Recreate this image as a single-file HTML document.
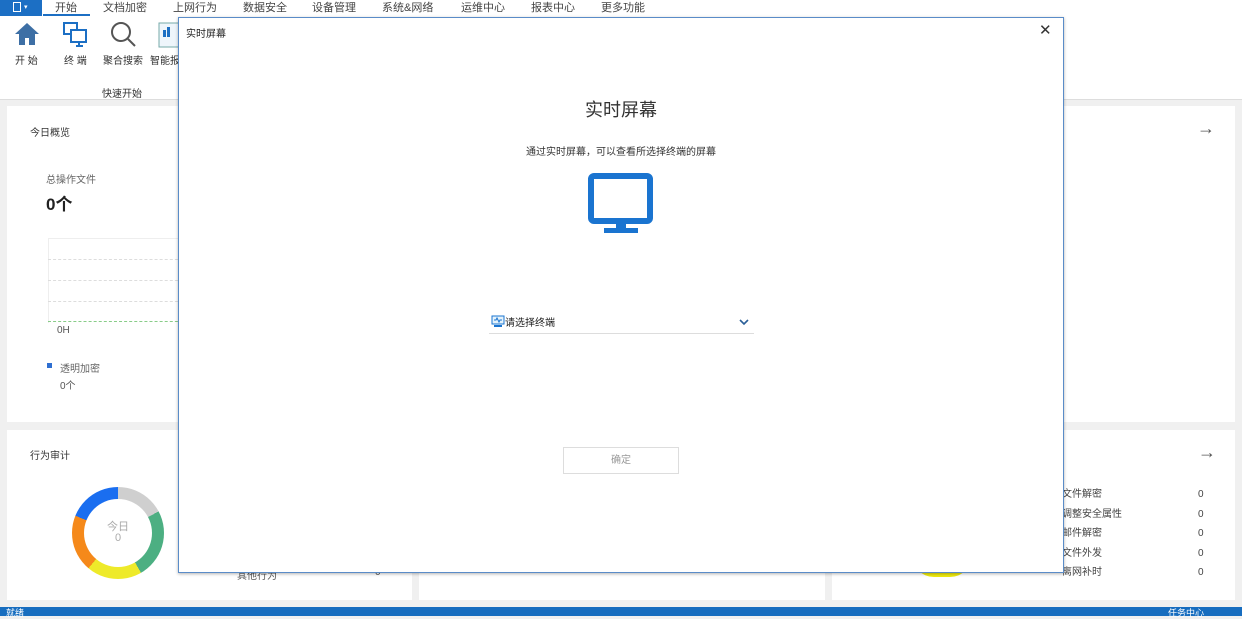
<!DOCTYPE html>
<html><head><meta charset="utf-8"><style>
*{margin:0;padding:0;box-sizing:border-box}
body{width:1242px;height:616px;overflow:hidden;background:#f0f0f0;font-family:"Liberation Sans","Noto Sans CJK SC",sans-serif;color:#333;position:relative;font-size:10px}
.abs{position:absolute}
.menu{left:0;top:0;width:1242px;height:16px;background:#fff}
.menu span{position:absolute;top:-1px;font-size:11px;color:#444}
.ribbon{left:0;top:16px;width:1242px;height:84px;background:#fff;border-bottom:1px solid #ddd}
.card{background:#fff}
.t{font-size:10px;color:#333}
</style></head><body>
<div class="abs menu">
 <div class="abs" style="left:0;top:0;width:42px;height:16px;background:#1c6fc4"></div>
 <div class="abs" style="left:13px;top:2px;width:8px;height:10px;border:1.5px solid #fff"></div>
 <div class="abs" style="left:24px;top:3px;color:#fff;font-size:7px">▾</div>
 <span style="left:55px">开始</span>
 <div class="abs" style="left:43px;top:14px;width:47px;height:2px;background:#1c6fc4"></div>
 <span style="left:103px">文档加密</span><span style="left:173px">上网行为</span><span style="left:243px">数据安全</span><span style="left:312px">设备管理</span><span style="left:382px">系统&amp;网络</span><span style="left:461px">运维中心</span><span style="left:531px">报表中心</span><span style="left:601px">更多功能</span>
</div>
<div class="abs ribbon">
 <svg class="abs" style="left:14px;top:6px" width="26" height="24" viewBox="0 0 26 24"><path d="M13 1L1 12h4v11h6v-7h4v7h6V12h4z" fill="#3d6fa5"/></svg>
 <svg class="abs" style="left:62px;top:5px" width="28" height="28" viewBox="0 0 28 28" fill="none" stroke="#1c6fc4" stroke-width="2"><rect x="2" y="2" width="13" height="11"/><rect x="9" y="9" width="15" height="12" fill="#fff"/><path d="M14 25h7M17 21v4"/></svg>
 <svg class="abs" style="left:110px;top:5px" width="28" height="28" viewBox="0 0 28 28" fill="none" stroke="#555" stroke-width="2"><circle cx="11" cy="11" r="9"/><path d="M18 18l7 7"/></svg>
 <svg class="abs" style="left:158px;top:6px" width="22" height="26" viewBox="0 0 22 26"><rect x="1" y="1" width="20" height="24" fill="#eef5fb" stroke="#7aa"/><rect x="5" y="8" width="3" height="7" fill="#1c6fc4"/><rect x="9" y="5" width="3" height="10" fill="#1c6fc4"/></svg>
 <div class="abs t" style="left:15px;top:36px">开 始</div>
 <div class="abs t" style="left:64px;top:36px">终 端</div>
 <div class="abs t" style="left:103px;top:36px">聚合搜索</div>
 <div class="abs t" style="left:150px;top:36px">智能报</div>
 <div class="abs t" style="left:102px;top:69px">快速开始</div>
</div>
<div class="abs card" style="left:7px;top:106px;width:405px;height:316px">
 <div class="abs t" style="left:23px;top:18px">今日概览</div>
 <div class="abs" style="left:39px;top:65px;color:#666">总操作文件</div>
 <div class="abs" style="left:39px;top:84px;font-size:17px;font-weight:bold;color:#222">0个</div>
 <div class="abs" style="left:41px;top:132px;width:140px;height:85px;border-top:1px solid #eee;border-left:1px solid #eee"></div>
 <div class="abs" style="left:41px;top:153px;width:140px;border-top:1px dashed #ddd"></div>
 <div class="abs" style="left:41px;top:174px;width:140px;border-top:1px dashed #ddd"></div>
 <div class="abs" style="left:41px;top:195px;width:140px;border-top:1px dashed #ddd"></div>
 <div class="abs" style="left:41px;top:215px;width:140px;border-top:1px dashed #8c8"></div>
 <div class="abs" style="left:50px;top:219px;color:#555">0H</div>
 <div class="abs" style="left:40px;top:257px;width:5px;height:5px;background:#2e6fd1"></div>
 <div class="abs" style="left:53px;top:254px;color:#666">透明加密</div>
 <div class="abs" style="left:53px;top:271px;color:#555">0个</div>
</div>
<div class="abs card" style="left:1063px;top:106px;width:172px;height:316px">
 <div class="abs" style="left:134px;top:12px;font-size:18px;color:#555">→</div>
</div>
<div class="abs card" style="left:7px;top:430px;width:405px;height:170px">
 <div class="abs t" style="left:23px;top:17px">行为审计</div>
 <div class="abs" style="left:65px;top:57px;width:92px;height:92px;border-radius:50%;background:conic-gradient(#cfcfcf 0 62deg,#4caf82 62deg 150deg,#eeea2a 150deg 220deg,#f5891a 220deg 292deg,#1a6ef0 292deg 360deg)"></div>
 <div class="abs" style="left:77px;top:69px;width:68px;height:68px;border-radius:50%;background:#fff"></div>
 <div class="abs" style="left:100px;top:88px;color:#aaa;font-size:11px">今日</div>
 <div class="abs" style="left:108px;top:102px;color:#aaa;font-size:11px">0</div>
 <div class="abs" style="left:230px;top:137px;color:#555">其他行为</div>
 <div class="abs" style="left:368px;top:137px;color:#555">0</div>
</div>
<div class="abs card" style="left:419px;top:430px;width:406px;height:170px"></div>
<div class="abs card" style="left:832px;top:430px;width:403px;height:170px">
 <div class="abs" style="left:80px;top:125px;width:60px;height:22px;border-radius:0 0 30px 30px;background:#eeea10"></div>
 <div class="abs" style="left:366px;top:12px;font-size:18px;color:#555">→</div>
 <div class="abs" style="left:230px;top:55px;color:#444;line-height:19.5px">文件解密<br>调整安全属性<br>邮件解密<br>文件外发<br>离网补时</div>
 <div class="abs" style="left:366px;top:55px;color:#444;line-height:19.5px">0<br>0<br>0<br>0<br>0</div>
</div>
<div class="abs" style="left:0;top:607px;width:1242px;height:9px;background:#176dbf"></div>
<div class="abs" style="left:6px;top:607px;color:#fff;font-size:9px;line-height:12px">就绪</div>
<div class="abs" style="left:1168px;top:607px;color:#fff;font-size:9px;line-height:12px">任务中心</div>
<div class="abs" style="left:178px;top:17px;width:886px;height:556px;background:#fff;border:1px solid #5a8cc8;box-shadow:0 1px 3px rgba(0,0,0,.3)">
 <div class="abs" style="left:7px;top:7px;font-size:10px;color:#222">实时屏幕</div>
 <div class="abs" style="left:860px;top:3px;font-size:15px;color:#333">✕</div>
 <div class="abs" style="left:0;top:78px;width:884px;text-align:center;font-size:18px;color:#333">实时屏幕</div>
 <div class="abs" style="left:0;top:125px;width:884px;text-align:center;font-size:10px;color:#333">通过实时屏幕，可以查看所选择终端的屏幕</div>
 <svg class="abs" style="left:409px;top:155px" width="66" height="62" viewBox="0 0 66 62"><rect x="3" y="3" width="59" height="45" rx="3" fill="none" stroke="#1a74d0" stroke-width="6"/><rect x="28" y="48" width="10" height="7" fill="#1a74d0"/><rect x="16" y="55" width="34" height="5" fill="#1a74d0"/></svg>
 <svg class="abs" style="left:312px;top:297px" width="14" height="13" viewBox="0 0 14 13"><rect x="1" y="1" width="12" height="8" fill="#e5f3fb" stroke="#1a74d0"/><path d="M3 5h2l1-2 2 4 1-2h2" stroke="#1a74d0" fill="none"/><rect x="3" y="10" width="8" height="2" fill="#1a74d0"/></svg>
 <div class="abs" style="left:326px;top:296px;font-size:10px;color:#222">请选择终端</div>
 <svg class="abs" style="left:560px;top:301px" width="10" height="7" viewBox="0 0 10 7"><path d="M1 1l4 4 4-4" stroke="#2a5f98" stroke-width="1.6" fill="none"/></svg>
 <div class="abs" style="left:310px;top:315px;width:265px;border-top:1px solid #ddd"></div>
 <div class="abs" style="left:384px;top:429px;width:116px;height:27px;border:1px solid #ddd;text-align:center;line-height:25px;color:#999;font-size:10px">确定</div>
</div>
</body></html>
